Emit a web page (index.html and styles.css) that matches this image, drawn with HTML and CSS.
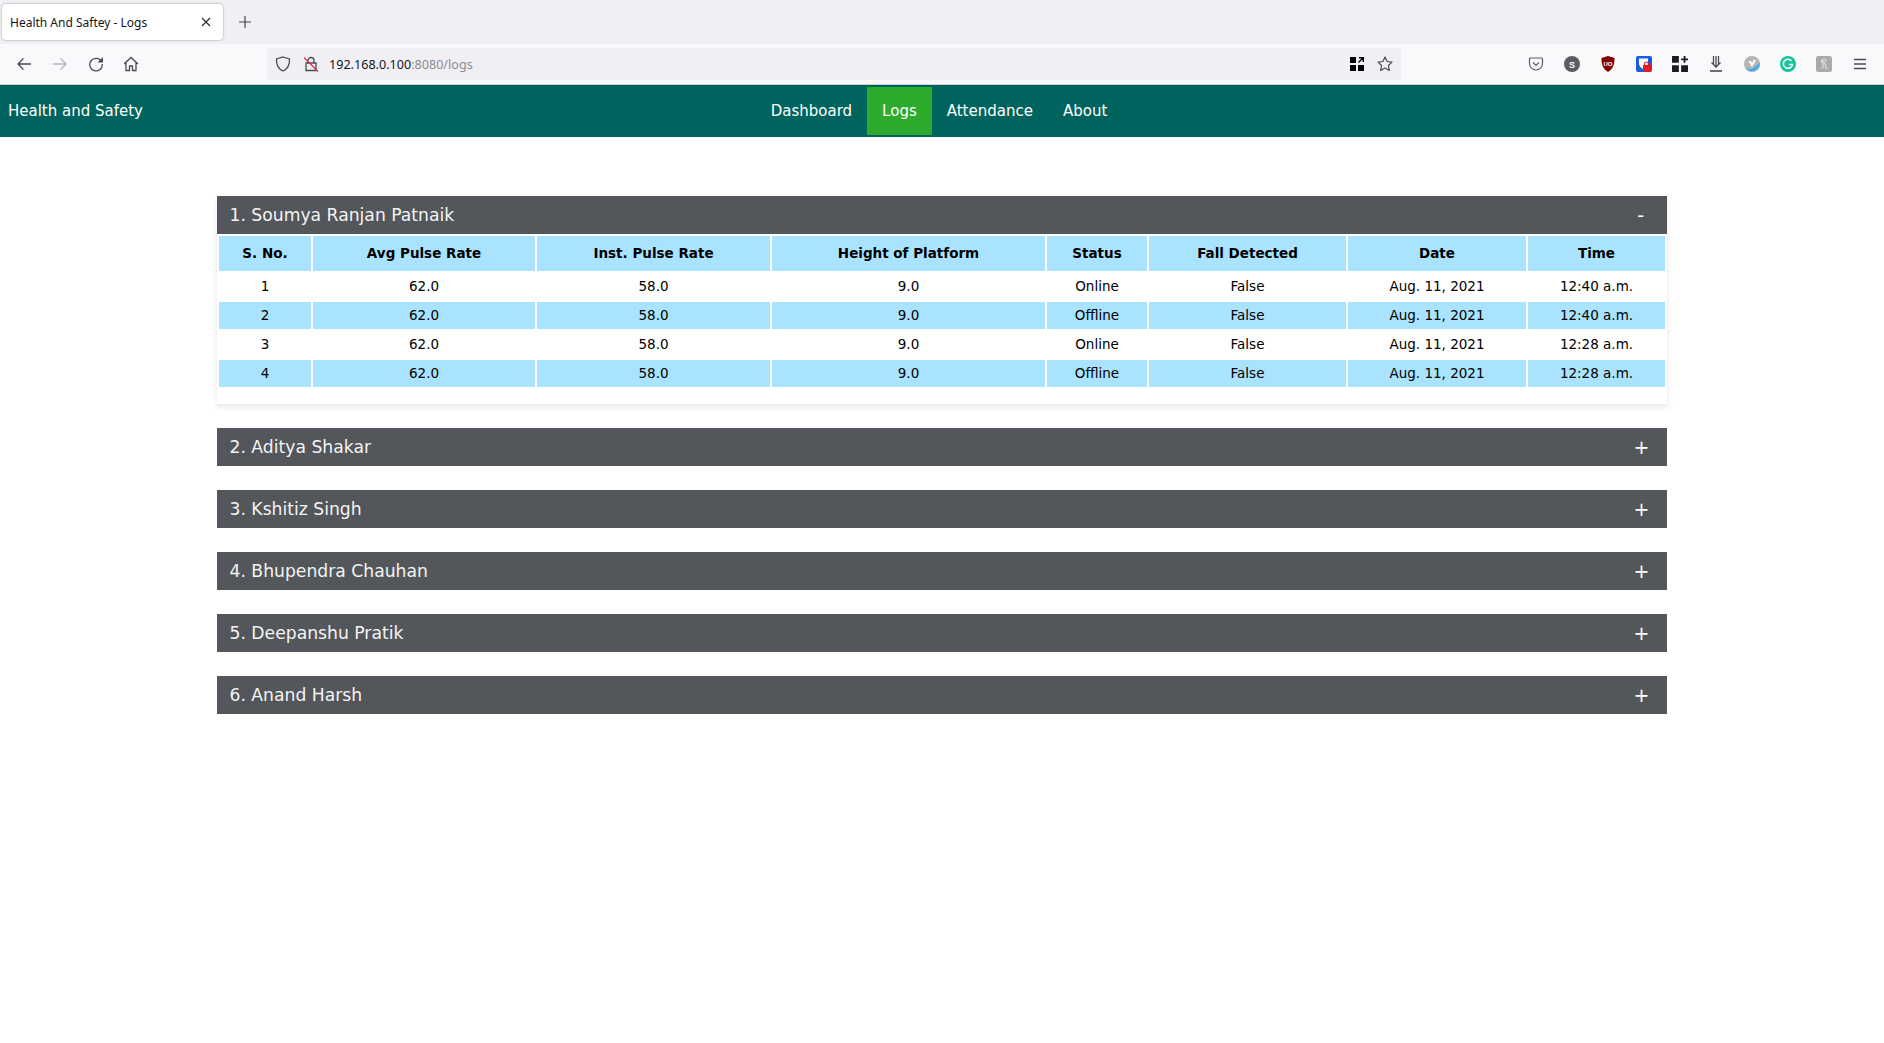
FILE: index.html
```html
<!DOCTYPE html>
<html>
<head>
    <meta charset="utf-8">
    <title>Health And Saftey - Logs</title>
    <link rel="stylesheet" href="styles.css">
</head>
<body>
<div class="tabbar">
    <div class="tab">
        <span class="tab-title">Health And Saftey - Logs</span>
        <svg class="tab-close" width="10" height="10" viewBox="0 0 10 10"><path d="M1 1l8 8M9 1l-8 8" stroke="#2b2a33" stroke-width="1.2" fill="none"/></svg>
    </div>
    <svg class="tab-new" width="12" height="12" viewBox="0 0 12 12"><path d="M6 0v12M0 6h12" stroke="#45454d" stroke-width="1.2" fill="none"/></svg>
</div>
<div class="toolbar">
    <div class="nav-btns">
        <svg class="tb-icon" viewBox="0 0 16 16"><path d="M15 8H2M7.500 2.500L2 8l5.500 5.500" stroke="#4b4a52" stroke-width="1.300" fill="none"/></svg>
        <svg class="tb-icon" viewBox="0 0 16 16"><path d="M1 8h13M8.500 2.500L14 8l-5.500 5.500" stroke="#b5b5ba" stroke-width="1.300" fill="none"/></svg>
        <svg class="tb-icon" viewBox="0 0 16 16"><path d="M13.500 5.500A6.300 6.300 0 1 0 14.300 8" stroke="#4b4a52" stroke-width="1.300" fill="none"/><path d="M15 1v5.500H9.500z" fill="#4b4a52"/></svg>
        <svg class="tb-icon" viewBox="1 0 16 16"><path d="M1 8l7-6.500L15 8M3 6.500V14.500h3.500V10h3v4.500H13V6.500" stroke="#4b4a52" stroke-width="1.300" fill="none"/></svg>
    </div>
    <div class="urlbar">
        <svg class="url-shield" width="16" height="16" viewBox="0 0 16 16"><path d="M8 1l6.500 2c.3 5.500-1.500 9.700-6.500 12C3 12.700 1.200 8.500 1.500 3z" stroke="#4b4a52" stroke-width="1.300" fill="none"/></svg>
        <svg class="url-lock" width="16" height="16" viewBox="0 0 16 16"><path d="M5 7V4.500a3 3 0 0 1 6 0V7M3 7h10v7.500H3z" stroke="#4b4a52" stroke-width="1.300" fill="none"/><path d="M1 1.500l14 14" stroke="#e22850" stroke-width="1.300"/></svg>
        <span class="url-text">192.168.0.100<span class="url-dim">:8080/logs</span></span>
        <svg class="url-qr" width="14" height="14" viewBox="0 0 14 14"><path d="M0 0h6v6H0zM0 8h6v6H0zM8 8h6v6H8z" fill="#000"/><path d="M8.500 5.500L13 1M9 .7h4.300V5" stroke="#000" stroke-width="1.400" fill="none"/></svg>
        <svg class="url-star" width="16" height="16" viewBox="0 0 16 16"><path d="M8 1l2.100 4.500 4.900.6-3.600 3.400.9 4.900L8 12l-4.300 2.400.9-4.900L1 6.100l4.900-.6z" stroke="#4b4a52" stroke-width="1.200" fill="none" stroke-linejoin="round"/></svg>
    </div>
    <div class="ext-btns">
        <svg class="ext" viewBox="0 0 16 16"><path d="M2.500 2h11c.7 0 1 .4 1 1v4.500c0 3.800-3 6.500-6.500 6.500S1.500 11.300 1.500 7.500V3c0-.6.300-1 1-1z" stroke="#5b5b66" stroke-width="1.200" fill="none"/><path d="M5 6.500L8 9.500l3-3" stroke="#5b5b66" stroke-width="1.200" fill="none"/></svg>
        <svg class="ext" viewBox="0 0 16 16"><circle cx="8" cy="8" r="8" fill="#5b5b66"/><text x="8" y="11.500" class="ext-s">S</text></svg>
        <svg class="ext" viewBox="0 0 16 16"><path d="M8 0l6.500 2c.3 6-1.500 11-6.500 14C3 13 1.200 8 1.500 2z" fill="#800000"/><text x="8" y="9.800" class="ext-ub">UO</text></svg>
        <svg class="ext" viewBox="0 0 16 16"><rect width="16" height="16" rx="2" fill="#175ddc"/><path d="M3 2.500h9v5c0 2.500-2 4.500-4.500 6-2.500-1.500-4.500-3.500-4.500-6z" fill="#fff"/><path d="M8.500 9.500V8a2 2 0 0 1 4 0v1.500" stroke="#e21b2c" stroke-width="1.200" fill="none"/><rect x="7" y="9" width="8" height="7" fill="#e21b2c"/></svg>
        <svg class="ext" viewBox="0 0 14 14"><path d="M0 0h6v6H0zM0 8h6v6H0zM8 8h6v6H8z" fill="#1c1b22"/><path d="M11 0v6M8 3h6" stroke="#1c1b22" stroke-width="1.600" fill="none"/></svg>
        <svg class="ext" viewBox="0 0 16 16"><path d="M5.500 0v8.500M10.500 0v8.500M8 0v11M3.500 6.500L8 11l4.500-4.500" stroke="#4b4a52" stroke-width="1.300" fill="none"/><path d="M2 15h12" stroke="#4b4a52" stroke-width="1.600"/></svg>
        <svg class="ext" viewBox="0 0 16 16"><circle cx="8" cy="8" r="8" fill="#b5b5b5"/><path d="M1.800 12.500A8 8 0 0 0 16 8V6.500L8 13z" fill="#4fa9e3"/><path d="M4.500 5L8 11l4-7H9.500L8 7.500 7 5z" fill="#fff"/></svg>
        <svg class="ext" viewBox="0 0 16 16"><circle cx="8" cy="8" r="8" fill="#15c39a"/><path d="M11.500 4.800a4.600 4.600 0 1 0 1 3.700H8.800" stroke="#fff" stroke-width="1.500" fill="none"/></svg>
        <svg class="ext" viewBox="0 0 16 16"><rect width="16" height="16" rx="2.500" fill="#aaa"/><path d="M5.500 6.500C5 4 7 2.500 8.500 2.800c2 .3 1.800 3-.3 3.400M7 4v7c0 1-.7 1.500-1.500 1.300M8.500 6.500c1 2 1.500 4.500 1.500 5.500.1 1 1 1 1.500.5" stroke="#f0f0f0" stroke-width="1" fill="none"/></svg>
        <svg class="ext" viewBox="0 0 16 16"><path d="M2 3.500h12M2 8h12M2 12.500h12" stroke="#4b4a52" stroke-width="1.300" fill="none"/></svg>
    </div>
</div>

<nav class="navbar">
    <a href="#" class="brand">Health and Safety</a>
    <ul class="menu">
        <li><a href="#">Dashboard</a></li>
        <li><a href="#" class="active">Logs</a></li>
        <li><a href="#">Attendance</a></li>
        <li><a href="#">About</a></li>
    </ul>
</nav>

<div class="container">
    <div class="panel open">
        <div class="panel-head"><span>1. Soumya Ranjan Patnaik</span><span class="toggle minus">-</span></div>
        <table class="logs">
            <colgroup>
                <col class="c1"><col class="c2"><col class="c3"><col class="c4"><col class="c5"><col class="c6"><col class="c7"><col class="c8">
            </colgroup>
            <thead>
                <tr><th>S. No.</th><th>Avg Pulse Rate</th><th>Inst. Pulse Rate</th><th>Height of Platform</th><th>Status</th><th>Fall Detected</th><th>Date</th><th>Time</th></tr>
            </thead>
            <tbody>
                <tr><td>1</td><td>62.0</td><td>58.0</td><td>9.0</td><td>Online</td><td>False</td><td>Aug. 11, 2021</td><td>12:40 a.m.</td></tr>
                <tr><td>2</td><td>62.0</td><td>58.0</td><td>9.0</td><td>Offline</td><td>False</td><td>Aug. 11, 2021</td><td>12:40 a.m.</td></tr>
                <tr><td>3</td><td>62.0</td><td>58.0</td><td>9.0</td><td>Online</td><td>False</td><td>Aug. 11, 2021</td><td>12:28 a.m.</td></tr>
                <tr><td>4</td><td>62.0</td><td>58.0</td><td>9.0</td><td>Offline</td><td>False</td><td>Aug. 11, 2021</td><td>12:28 a.m.</td></tr>
            </tbody>
        </table>
    </div>
    <div class="panel"><div class="panel-head"><span>2. Aditya Shakar</span><span class="toggle">+</span></div></div>
    <div class="panel"><div class="panel-head"><span>3. Kshitiz Singh</span><span class="toggle">+</span></div></div>
    <div class="panel"><div class="panel-head"><span>4. Bhupendra Chauhan</span><span class="toggle">+</span></div></div>
    <div class="panel"><div class="panel-head"><span>5. Deepanshu Pratik</span><span class="toggle">+</span></div></div>
    <div class="panel"><div class="panel-head"><span>6. Anand Harsh</span><span class="toggle">+</span></div></div>
</div>
</body>
</html>
```
FILE: styles.css
```css
html,body{
    margin: 0;
    padding: 0;
    height: 100%;
    overflow: hidden;
    background: #fff;
    font-family: "DejaVu Sans", sans-serif;
}
a{
    text-decoration: none;
    color: #fff;
}
svg{
    display: block;
    flex: none;
}

/* browser chrome */
.tabbar{
    display: flex;
    align-items: center;
    height: 44px;
    background: #f0f0f4;
    padding-left: 2px;
    box-sizing: border-box;
}
.tab{
    display: flex;
    align-items: center;
    justify-content: space-between;
    box-sizing: border-box;
    width: 221px;
    height: 36px;
    padding: 0 12px 0 8px;
    background: #fff;
    border-radius: 4px;
    box-shadow: 0 0 2px rgba(0,0,0,.45);
}
.tab-title{
    font: 12px "Noto Sans", sans-serif;
    color: #15141a;
}
.tab-new{
    margin-left: 16px;
}
.toolbar{
    display: flex;
    align-items: center;
    height: 41px;
    box-sizing: border-box;
    background: #f9f9fb;
    border-bottom: 1px solid #cfcfd8;
}
.nav-btns{
    display: flex;
    gap: 20px;
    padding-left: 16px;
    width: 267px;
    box-sizing: border-box;
}
.tb-icon{
    width: 16px;
    height: 16px;
}
.urlbar{
    display: flex;
    align-items: center;
    width: 1134px;
    height: 32px;
    box-sizing: border-box;
    padding: 0 8px 0 8px;
    background: #f0f0f4;
    border-radius: 4px;
}
.url-lock{
    margin-left: 12px;
}
.url-text{
    flex: 1;
    margin-left: 10px;
    font: 12.600px "Noto Sans", sans-serif;
    color: #15141a;
}
.url-dim{
    color: #8b8b92;
}
.url-star{
    margin-left: 13px;
}
.ext-btns{
    display: flex;
    gap: 20px;
    margin-left: 127px;
}
.ext{
    width: 16px;
    height: 16px;
}
.ext-s{
    font: bold 9px "Liberation Sans", sans-serif;
    fill: #fff;
    text-anchor: middle;
}
.ext-ub{
    font: bold 6px "Liberation Sans", sans-serif;
    fill: #fff;
    text-anchor: middle;
}

/* navbar */
.navbar{
    display: grid;
    grid-template-columns: 1fr auto 1fr;
    align-items: center;
    height: 52px;
    background: #00645e;
}
.brand{
    padding-left: 8px;
    font-size: 15px;
}
.menu{
    display: flex;
    list-style: none;
    margin: 0;
    padding: 0 6px 0 0;
}
.menu a{
    display: block;
    height: 48px;
    line-height: 48px;
    padding: 0 15px;
    font-size: 15px;
}
.menu a.active{
    background: #2cab2c;
}

/* logs */
.container{
    width: 1450px;
    margin: 59px auto 0;
}
.panel{
    margin-bottom: 24px;
}
.panel.open{
    padding-bottom: 15px;
    box-shadow: 0 3px 6px rgba(0,0,0,.1);
}
.panel-head{
    display: flex;
    justify-content: space-between;
    align-items: center;
    height: 38px;
    padding: 0 17.500px 0 12.500px;
    background: #53565a;
    color: #f4f4f4;
    font-size: 17.200px;
}
.toggle{
    font-size: 19px;
    color: #fff;
}
.toggle.minus{
    padding-right: 5.500px;
}
.logs{
    width: 100%;
    table-layout: fixed;
    border-spacing: 2px;
    border-collapse: separate;
    font-size: 13.500px;
    color: #000;
}
.c1{width: 92px;}
.c2{width: 222px;}
.c3{width: 233px;}
.c4{width: 273px;}
.c5{width: 100px;}
.c6{width: 197px;}
.c7{width: 178px;}
.c8{width: 137px;}
.logs th{
    height: 35px;
    padding: 0 0 1px;
    background: #a9e3ff;
    font-weight: bold;
    box-sizing: border-box;
}
.logs td{
    height: 27px;
    padding: 0 0 1px;
    text-align: center;
    box-sizing: border-box;
}
.logs tbody tr:nth-child(even) td{
    background: #a9e3ff;
}
```
